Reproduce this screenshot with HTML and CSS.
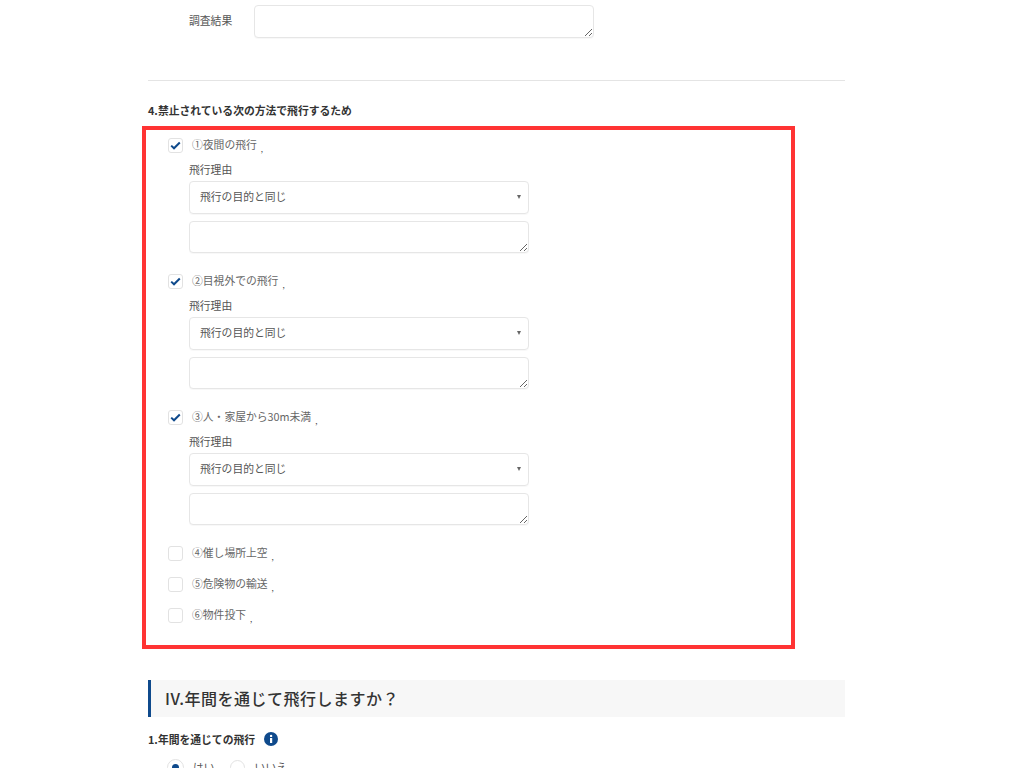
FILE: index.html
```html
<!DOCTYPE html>
<html lang="ja">
  <head>
    <meta charset="UTF-8" />
    <meta name="viewport" content="width=device-width, initial-scale=1.0" />
    <title>飛行計画</title>
    <link rel="stylesheet" href="styles.css">
  </head>
  <body>
    <div class="page">
      <div class="result-row">
        <div class="result-label">調査結果</div>
        <textarea class="text-box result-box"></textarea>
      </div>

      <hr class="divider" />

      <div class="question">4.禁止されている次の方法で飛行するため</div>

      <div class="check-list">
        <div class="check-item">
          <div class="check-row">
            <span class="check on">
              <svg width="11" height="9" viewBox="0 0 11 9"><path d="M1.2 4.6 4 7.3 9.8 1.5" fill="none" stroke="#0f4a8c" stroke-width="2" /></svg>
            </span>
            <span class="check-label">①夜間の飛行</span>
            <span class="mark">,</span>
          </div>
          <div class="reason">
            <div class="reason-label">飛行理由</div>
            <div class="select-box">飛行の目的と同じ</div>
            <textarea class="text-box reason-text"></textarea>
          </div>
        </div>

        <div class="check-item">
          <div class="check-row">
            <span class="check on">
              <svg width="11" height="9" viewBox="0 0 11 9"><path d="M1.2 4.6 4 7.3 9.8 1.5" fill="none" stroke="#0f4a8c" stroke-width="2" /></svg>
            </span>
            <span class="check-label">②目視外での飛行</span>
            <span class="mark">,</span>
          </div>
          <div class="reason">
            <div class="reason-label">飛行理由</div>
            <div class="select-box">飛行の目的と同じ</div>
            <textarea class="text-box reason-text"></textarea>
          </div>
        </div>

        <div class="check-item">
          <div class="check-row">
            <span class="check on">
              <svg width="11" height="9" viewBox="0 0 11 9"><path d="M1.2 4.6 4 7.3 9.8 1.5" fill="none" stroke="#0f4a8c" stroke-width="2" /></svg>
            </span>
            <span class="check-label">③人・家屋から30m未満</span>
            <span class="mark">,</span>
          </div>
          <div class="reason">
            <div class="reason-label">飛行理由</div>
            <div class="select-box">飛行の目的と同じ</div>
            <textarea class="text-box reason-text"></textarea>
          </div>
        </div>

        <div class="check-row plain">
          <span class="check"></span>
          <span class="check-label">④催し場所上空</span>
          <span class="mark">,</span>
        </div>
        <div class="check-row plain">
          <span class="check"></span>
          <span class="check-label">⑤危険物の輸送</span>
          <span class="mark">,</span>
        </div>
        <div class="check-row plain">
          <span class="check"></span>
          <span class="check-label">⑥物件投下</span>
          <span class="mark">,</span>
        </div>
      </div>

      <div class="highlight"></div>

      <h2 class="section-title">IV.年間を通じて飛行しますか？</h2>

      <div class="question with-icon">
        1.年間を通じての飛行
        <svg class="info" width="14" height="14" viewBox="0 0 14 14">
          <circle cx="7" cy="7" r="7" fill="#0f4a8c" />
          <rect x="6" y="6" width="2.2" height="5" fill="#fff" />
          <circle cx="7.1" cy="3.9" r="1.2" fill="#fff" />
        </svg>
      </div>

      <div class="radio-row">
        <span class="radio on"></span>
        <span class="radio-label">はい</span>
        <span class="radio"></span>
        <span class="radio-label">いいえ</span>
      </div>
    </div>
  </body>
</html>
```

FILE: styles.css
```css
* {
  margin: 0;
  padding: 0;
  box-sizing: border-box;
}

html,
body {
  height: 768px;
  overflow: hidden;
}

body {
  font-family: "Noto Sans CJK JP", "Noto Sans", sans-serif;
  font-size: 10.8px;
  background: #fff;
  color: #555;
}

.page {
  position: relative;
  width: 697px;
  margin-left: 148px;
  padding-top: 5px;
}

.result-row {
  display: flex;
  padding-left: 41px;
}

.result-label {
  width: 65px;
  line-height: 30px;
}

.text-box {
  display: block;
  width: 340px;
  border: 1px solid #e6e6e6;
  border-radius: 4px;
  background: #fff;
  outline: none;
  box-shadow: 0 1px 1px rgba(0, 0, 0, 0.03);
}

.result-box {
  height: 33px;
}

.divider {
  border: none;
  border-top: 1px solid #e4e4e4;
  margin-top: 42px;
}

.question {
  margin-top: 21px;
  font-weight: 700;
  line-height: 16px;
  color: #333;
}

.check-list {
  margin-top: 20px;
}

.check-item {
  height: 136px;
}

.check-row {
  display: flex;
  align-items: center;
  height: 15px;
  padding-left: 20px;
}

.check-row.plain {
  margin-bottom: 16px;
}

.check {
  display: flex;
  align-items: center;
  justify-content: center;
  width: 15px;
  height: 15px;
  margin-right: 9px;
  border: 1px solid #e2e2e2;
  border-radius: 3px;
  background: #fff;
}

.check-label {
  margin-bottom: 2px;
  color: #666;
  line-height: 15px;
}

.mark {
  margin: 6px 0 0 4px;
  font-size: 8px;
  line-height: 8px;
  color: #444;
}

.reason {
  padding: 8px 0 0 41px;
}

.reason-label {
  line-height: 16px;
}

.select-box {
  position: relative;
  width: 340px;
  height: 33px;
  margin-top: 4px;
  padding-left: 10px;
  border: 1px solid #e6e6e6;
  border-radius: 4px;
  line-height: 29px;
  box-shadow: 0 1px 1px rgba(0, 0, 0, 0.03);
}

.select-box::after {
  content: "";
  position: absolute;
  top: 13px;
  right: 7px;
  border-style: solid;
  border-width: 4px 2.5px 0;
  border-color: #666 transparent transparent;
}

.reason-text {
  height: 32px;
  margin-top: 7px;
}

.highlight {
  position: absolute;
  top: 126px;
  left: -6px;
  width: 653px;
  height: 523px;
  border: 4px solid #ff3333;
  pointer-events: none;
}

.section-title {
  height: 37px;
  margin-top: 57px;
  padding-left: 14px;
  border-left: 3px solid #0f4a8c;
  background: #f7f7f7;
  font-size: 16px;
  font-weight: 500;
  line-height: 36px;
  letter-spacing: 0.5px;
  color: #333;
}

.with-icon {
  display: flex;
  align-items: center;
  margin-top: 14px;
}

.info {
  margin-left: 9px;
}

.radio-row {
  display: flex;
  align-items: center;
  margin-top: 13px;
  padding-left: 20px;
  height: 15px;
}

.radio {
  width: 15px;
  height: 15px;
  margin-right: 10px;
  border: 1px solid #e2e2e2;
  border-radius: 50%;
  background: #fff;
}

.radio.on {
  border: 4px solid #fff;
  outline: 1px solid #e2e2e2;
  background: #0f4a8c;
}

.radio-label {
  margin-right: 15px;
  line-height: 15px;
}
```
